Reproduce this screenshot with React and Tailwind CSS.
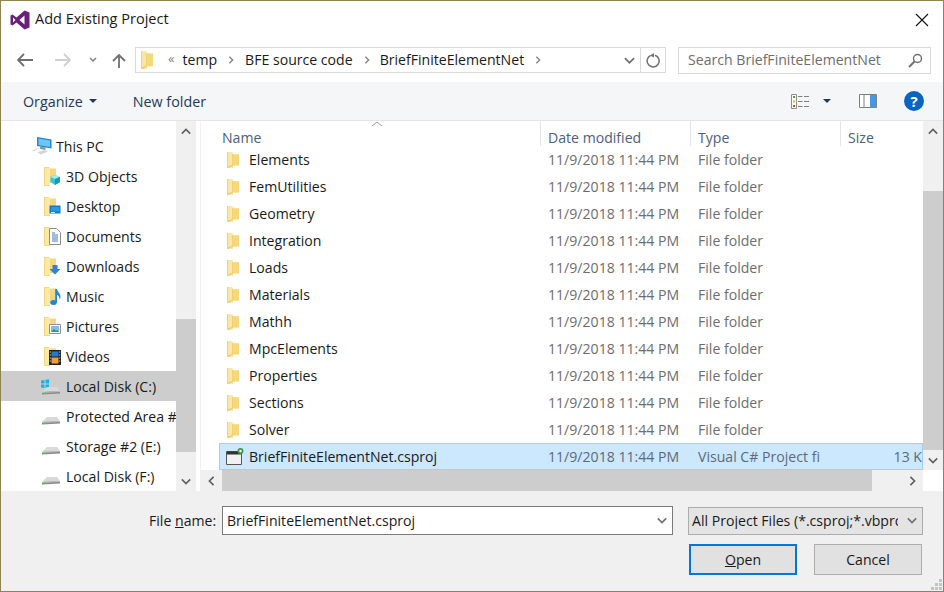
import React from 'react';

const Folder = ({ className = '', height = 16 }) => (
  <svg width="12" height={height} viewBox="0 0 12 16" preserveAspectRatio="none" className={`shrink-0 ${className}`}>
    <path d="M0 0h5l1.500 2H12v11.500H6V16H0z" fill="#fbe7a3" />
    <path d="M6 2.500h6v11H6z" fill="#f8d777" />
    <path d="M0 0h1v16H0zM6 2v11.500h-1V2z" fill="#efd07f" />
    <path d="M1 14.500L6 12.500v1L1 16z" fill="#e9c86e" />
  </svg>
);

const Chevron = ({ dir = 'down', className = '' }) => {
  const d = {
    down: 'M1 2l5 5 5-5',
    up: 'M1 7l5-5 5 5',
    left: 'M7 1L2 6l5 5',
    right: 'M2 1l5 5-5 5',
  }[dir];
  const horizontal = dir === 'up' || dir === 'down';
  return (
    <svg width={horizontal ? 12 : 9} height={horizontal ? 9 : 12} viewBox={horizontal ? '0 0 12 9' : '0 0 9 12'} className={`shrink-0 ${className}`}>
      <path d={d} fill="none" stroke="currentColor" strokeWidth="2" />
    </svg>
  );
};

const VsLogo = () => (
  <svg width="20" height="20" viewBox="0 0 20 20" className="shrink-0">
    <path d="M14.500 0.500L19.500 2.500V17.500L14.500 19.500L6.500 12.500L2.500 15.500L0.500 14.500V5.500L2.500 4.500L6.500 7.500z" fill="#68217a" />
    <path d="M14.500 5.500L9.500 10l5 4.500zM3 7.500v5L5.500 10z" fill="#fff" />
  </svg>
);

const PcIcon = () => (
  <svg width="20" height="18" viewBox="0 0 20 18" className="shrink-0">
    <path d="M5 0l14.500 2.500v9L5 9z" fill="#1f86d0" />
    <path d="M6.500 1.500L18 3.500v6.500L6.500 8z" fill="#6cc5f2" />
    <path d="M8 9.500l6 1-1 2.500-5-1z" fill="#8d99a2" />
    <path d="M0 13.500L6 11l1 .5L1 14.500zM5 15l8-2 3 1.500-7 3z" fill="#d3d7da" />
  </svg>
);

const Drive = ({ windows }) => (
  <svg width="20" height="18" viewBox="0 0 20 18" className="shrink-0">
    {windows && (
      <g fill="#14b4f0">
        <path d="M0 3.500l3.500-.5v3.500H0zM4.500 2.800L8 2.300v4.200H4.500zM0 7.500h3.500V11L0 10.500zM4.500 7.500H8v4L4.500 11z" />
      </g>
    )}
    <path d="M1 15l5-5h10l3 4z" fill="#d9d9d9" />
    <path d="M1 15l18-1v2.500L1 17.500z" fill="#8a8a8a" />
    <path d="M1 15l18-1v1L1 16z" fill="#bdbdbd" />
    <path d="M3 15.500l3-.2v1l-3 .2z" fill="#5fd35f" />
  </svg>
);

const LibraryBadge = ({ type }) => {
  if (type === 'cube')
    return (
      <g>
        <path d="M6.500 10l4.500-2 5 2v5l-5 3-4.500-3z" fill="#38c5d8" />
        <path d="M6.500 10l4.500 2 5-2-5-2z" fill="#a2edf2" />
        <path d="M11 12v6l5-3v-5z" fill="#139bb5" />
      </g>
    );
  if (type === 'desktop')
    return (
      <g>
        <path d="M5.500 8.500h11v8h-11z" fill="#1577c9" />
        <path d="M7 10h8.500v4.500H7z" fill="#1f9be8" />
        <path d="M7 15h4v.8H7z" fill="#fff" />
      </g>
    );
  if (type === 'docs')
    return (
      <g>
        <path d="M5.500 1.500h7l4 4v12h-11z" fill="#fdfdfd" stroke="#8b8b8b" />
        <path d="M8 6h3M8 8h6M8 10h6M8 12h6M8 14h6" stroke="#3e82bd" strokeWidth="1" />
      </g>
    );
  if (type === 'down')
    return <path d="M8.500 8h5v4h3l-5.500 5.500L5.500 12h3z" fill="#2c84d4" />;
  if (type === 'music')
    return (
      <g fill="#1b87e2">
        <ellipse cx="9.500" cy="15.500" rx="3.300" ry="2.500" />
        <path d="M11.200 2h1.800c.3 3 3.500 4 3.500 8 0 1-.3 2-.8 3 0-3-1.200-4.500-2.700-5.500v8h-1.800z" />
      </g>
    );
  if (type === 'pictures')
    return (
      <g>
        <path d="M5.500 7.500h11v9h-11z" fill="#fff" stroke="#8f8f8f" />
        <path d="M7 9h8v6H7z" fill="#7cc0ea" />
        <path d="M7 15l3-3 2 2 1-1 2 2z" fill="#3f8e63" />
      </g>
    );
  return (
    <g>
      <path d="M5 3h12v15H5z" fill="#222" />
      <path d="M7.500 4.500h7v5h-7z" fill="#2679d3" />
      <path d="M7.500 10.500h7v6h-7z" fill="#e8a236" />
      <path d="M5.800 4.500h1v1h-1zM5.800 7.500h1v1h-1zM5.800 10.500h1v1h-1zM5.800 13.500h1v1h-1zM15.200 4.500h1v1h-1zM15.200 7.500h1v1h-1zM15.200 10.500h1v1h-1zM15.200 13.500h1v1h-1z" fill="#eee" />
    </g>
  );
};

const LibraryIcon = ({ type }) => (
  <svg width="18" height="19" viewBox="0 0 18 19" className="shrink-0">
    <path d="M0 0h5l1 1.500h6v14.500H6V19H0z" fill="#f6d77e" />
    <path d="M1 1h5v17H1z" fill="#fbe9a8" />
    <LibraryBadge type={type} />
  </svg>
);

const navItems = [
  { label: '3D Objects', type: 'cube' },
  { label: 'Desktop', type: 'desktop' },
  { label: 'Documents', type: 'docs' },
  { label: 'Downloads', type: 'down' },
  { label: 'Music', type: 'music' },
  { label: 'Pictures', type: 'pictures' },
  { label: 'Videos', type: 'film' },
];

const drives = [
  { label: 'Local Disk (C:)', windows: true, selected: true },
  { label: 'Protected Area #2 (D:)' },
  { label: 'Storage #2 (E:)' },
  { label: 'Local Disk (F:)' },
];

const folders = ['Elements', 'FemUtilities', 'Geometry', 'Integration', 'Loads', 'Materials', 'Mathh', 'MpcElements', 'Properties', 'Sections', 'Solver'];

const Sidebar = () => (
  <div className="w-[175px] h-full overflow-hidden pt-[10px] text-[#1a1a1a]">
    <div className="h-[30px] flex items-center pl-[31px] gap-[4px] whitespace-nowrap">
      <PcIcon />
      <span className="pt-[2px]">This PC</span>
    </div>
    {navItems.map(item => (
      <div key={item.label} className="h-[30px] flex items-center pl-[43px] gap-[4px] whitespace-nowrap">
        <LibraryIcon type={item.type} />
        <span className="pt-[2px]">{item.label}</span>
      </div>
    ))}
    {drives.map(d => (
      <div key={d.label} className={`h-[30px] flex items-center pl-[40px] gap-[5px] whitespace-nowrap ${d.selected ? 'bg-[#cdcdcd]' : ''}`}>
        <Drive windows={d.windows} />
        <span className="pt-[2px]">{d.label}</span>
      </div>
    ))}
  </div>
);

const VScroll = ({ top, thumb, className = '' }) => (
  <div className={`w-[20px] flex flex-col bg-[#f0f0f0] ${className}`}>
    <div className="h-[20px] flex items-center justify-center text-[#606060]"><Chevron dir="up" className="w-[10px]" /></div>
    <div style={{ height: top }} />
    <div className="bg-[#cdcdcd]" style={{ height: thumb }} />
    <div className="flex-1" />
    <div className="h-[20px] flex items-center justify-center text-[#606060]"><Chevron dir="down" className="w-[10px]" /></div>
  </div>
);

const Row = ({ icon, name, date, type, size, selected }) => {
  const muted = selected ? 'text-[#5f6a75]' : 'text-[#6d6d6d]';
  return (
    <div className={`h-[27px] ml-[18px] flex items-center whitespace-nowrap border ${selected ? 'bg-[#cce8ff] border-[#99d1ff]' : 'border-transparent'}`}>
      <div className="w-[321px] flex items-center shrink-0 pl-[7px] text-[#1a1a1a]">
        <div className="w-[22px]">{icon}</div>
        <span className="pt-[2px]">{name}</span>
      </div>
      <div className={`w-[150px] shrink-0 pl-[7px] pt-[2px] ${muted}`}>{date}</div>
      <div className={`w-[150px] shrink-0 pl-[7px] pt-[2px] ${muted}`}>{type}</div>
      <div className={`flex-1 overflow-hidden text-right pt-[2px] ${muted}`}>{size}</div>
    </div>
  );
};

const ProjectIcon = () => (
  <svg width="18" height="18" viewBox="0 0 18 18" className="-ml-[1px]">
    <path d="M0.500 3.500h15v13h-15z" fill="#f1f1f1" stroke="#555" />
    <path d="M1 3.500h14v3H1z" fill="#333" />
    <circle cx="14.500" cy="3" r="3" fill="#3d9b46" />
    <circle cx="14.500" cy="3" r="1.200" fill="#fff" />
  </svg>
);

export default function App() {
  return (
    <div className="w-[944px] h-[592px] border border-[#8f8254] bg-white flex flex-col overflow-hidden text-[14.100px] leading-none font-['Open_Sans',sans-serif] relative">
      {/* Title bar */}
      <div className="h-[37px] shrink-0 flex items-center pl-[9px] pr-[14px]">
        <VsLogo />
        <span className="ml-[5px] text-[#1a1a1a] text-[14.500px]">Add Existing Project</span>
        <svg width="14" height="14" viewBox="0 0 14 14" className="ml-auto">
          <path d="M1 1l12 12M13 1L1 13" stroke="#111" strokeWidth="1.100" />
        </svg>
      </div>

      {/* Address row */}
      <div className="h-[44px] shrink-0 flex items-center">
        <svg width="16" height="14" viewBox="0 0 16 14" className="ml-[16px]">
          <path d="M1 7h15M7 1L1 7l6 6" fill="none" stroke="#707070" strokeWidth="1.800" />
        </svg>
        <svg width="16" height="14" viewBox="0 0 16 14" className="ml-[22px]">
          <path d="M0 7h15M9 1l6 6-6 6" fill="none" stroke="#d0d0d0" strokeWidth="1.800" />
        </svg>
        <svg width="8" height="6" viewBox="0 0 8 6" className="ml-[18px]">
          <path d="M1 1l3 3 3-3" fill="none" stroke="#808080" strokeWidth="1.500" />
        </svg>
        <svg width="14" height="15" viewBox="0 0 14 15" className="ml-[15px]">
          <path d="M7 15V2M1 8l6-6 6 6" fill="none" stroke="#707070" strokeWidth="1.800" />
        </svg>
        <div className="ml-[9px] w-[531px] h-[26px] border border-[#d9d9d9] flex items-center text-[#1a1a1a]">
          <Folder className="ml-[5px]" height={18} />
          <span className="ml-[15px] text-[#808080] text-[13px] -mt-[3px]">«</span>
          <span className="ml-[8px]">temp</span>
          <Chevron dir="right" className="ml-[11px] w-[6px] text-[#808080]" />
          <span className="ml-[11px]">BFE source code</span>
          <Chevron dir="right" className="ml-[11px] w-[6px] text-[#808080]" />
          <span className="ml-[10px]">BriefFiniteElementNet</span>
          <Chevron dir="right" className="ml-[11px] w-[6px] text-[#808080]" />
          <Chevron dir="down" className="ml-auto mr-[5px] w-[11px] text-[#707070]" />
          <div className="w-[25px] h-full border-l border-[#d9d9d9] flex items-center justify-center">
            <svg width="15" height="15" viewBox="0 0 15 15">
              <path d="M9 2.200A6 6 0 1 1 4.500 2.500" fill="none" stroke="#707070" strokeWidth="1.500" />
              <path d="M8 0v4.500l-4-2z" fill="#707070" />
            </svg>
          </div>
        </div>
        <div className="ml-[12px] w-[253px] h-[27px] border border-[#d9d9d9] flex items-center pl-[9px] pr-[7px] text-[#6d6d6d]">
          <span>Search BriefFiniteElementNet</span>
          <svg width="15" height="15" viewBox="0 0 15 15" className="ml-auto">
            <circle cx="9.500" cy="5.500" r="4" fill="none" stroke="#707070" strokeWidth="1.500" />
            <path d="M6.500 8.500L1 14" stroke="#707070" strokeWidth="2" />
          </svg>
        </div>
      </div>

      {/* Toolbar */}
      <div className="h-[39px] shrink-0 bg-[#f5f6f7] border-b border-[#e5e5e5] flex items-center text-[#1e395b]">
        <span className="ml-[22px] pt-[2px] text-[14.300px]">Organize</span>
        <span className="ml-[6px] w-0 h-0 border-x-[4px] border-x-transparent border-t-[4px] border-t-[#1e395b]" />
        <span className="ml-[36px] pt-[2px] text-[14.300px]">New folder</span>
        <svg width="18" height="15" viewBox="0 0 18 15" className="ml-auto">
          <path d="M.5.500h5v14h-5z" fill="#fff" stroke="#8f8f8f" />
          <path d="M2 2h2v2H2z" fill="#54a14e" />
          <path d="M2 6.500h2v2H2z" fill="#e0b732" />
          <path d="M2 11h2v2H2z" fill="#c94a2a" />
          <path d="M7 2.500h4.500M13 2.500h5M7 7.500h4.500M13 7.500h5M7 12.500h4.500M13 12.500h5" stroke="#808080" />
        </svg>
        <span className="ml-[14px] w-0 h-0 border-x-[4px] border-x-transparent border-t-[4px] border-t-[#1e395b]" />
        <svg width="18" height="14" viewBox="0 0 18 14" className="ml-[28px]">
          <path d="M.5.500h17v13H.5z" fill="#fff" stroke="#808080" />
          <path d="M5 1v12" stroke="#808080" />
          <path d="M11 1h6v12h-6z" fill="#3f9be8" />
        </svg>
        <div className="ml-[27px] mr-[19px] w-[20px] h-[20px] rounded-full bg-[#0a64c2] text-white flex items-center justify-center font-bold text-[15px]">?</div>
      </div>

      {/* Main */}
      <div className="h-[370px] shrink-0 flex">
        <Sidebar />
        <VScroll top={178} thumb={133} />
        <div className="w-[5px] border-r border-[#f0f0f0]" />
        <div className="flex-1 flex flex-col min-w-0">
          <div className="flex-1 flex min-h-0">
            <div className="flex-1 min-w-0 flex flex-col relative overflow-hidden">
              <svg width="10" height="5" viewBox="0 0 10 5" className="absolute left-[171px] top-0">
                <path d="M0 5l5-4 5 4" fill="none" stroke="#9a9a9a" />
              </svg>
              <div className="h-[25px] shrink-0 flex items-stretch text-[#4c607a] whitespace-nowrap">
                <div className="w-[340px] shrink-0 pl-[21px] border-r border-[#e5e5e5] flex items-center pt-[9px]">Name</div>
                <div className="w-[150px] shrink-0 pl-[7px] border-r border-[#e5e5e5] flex items-center pt-[9px]">Date modified</div>
                <div className="w-[150px] shrink-0 pl-[7px] border-r border-[#e5e5e5] flex items-center pt-[9px]">Type</div>
                <div className="flex-1 pl-[7px] flex items-center pt-[9px]">Size</div>
              </div>
              {folders.map(name => (
                <Row key={name} icon={<Folder />} name={name} date="11/9/2018 11:44 PM" type="File folder" />
              ))}
              <Row icon={<ProjectIcon />} name="BriefFiniteElementNet.csproj" date="11/9/2018 11:44 PM" type="Visual C# Project fi" size="13 K" selected />
            </div>
            <VScroll top={50} thumb={259} />
          </div>
          <div className="h-[21px] shrink-0 flex">
            <div className="flex-1 flex bg-[#f0f0f0]">
              <div className="w-[21px] flex items-center justify-center text-[#606060]"><Chevron dir="left" className="h-[10px]" /></div>
              <div className="w-[650px] bg-[#cdcdcd]" />
              <div className="flex-1 flex items-center justify-end pr-[6px] text-[#606060]"><Chevron dir="right" className="h-[10px]" /></div>
            </div>
            <div className="w-[20px] bg-white" />
          </div>
        </div>
      </div>

      {/* Footer */}
      <div className="flex-1 bg-[#f0f0f0] text-[#1a1a1a] pt-[15px] pl-[148px] relative">
        <div className="flex items-center">
          <span className="w-[73px] pt-[2px]">File <u>n</u>ame:</span>
          <div className="w-[451px] h-[29px] border border-[#7a7a7a] bg-white flex items-center pl-[4px] pr-[5px]">
            <span className="pt-[2px]">BriefFiniteElementNet.csproj</span>
            <Chevron dir="down" className="ml-auto w-[10px] text-[#707070]" />
          </div>
          <div className="ml-[15px] w-[235px] h-[28px] border border-[#acacac] bg-[#e4e4e4] flex items-center pl-[3px] pr-[5px] overflow-hidden whitespace-nowrap">
            <span className="w-[206px] overflow-hidden pt-[2px]">All Project Files (*.csproj;*.vbproj)</span>
            <Chevron dir="down" className="ml-auto w-[10px] text-[#707070]" />
          </div>
        </div>
        <div className="flex mt-[9px] ml-[540px]">
          <div className="w-[108px] h-[31px] border-2 border-[#0078d7] bg-[#e1e1e1] flex items-center justify-center"><span className="pt-[2px]"><u>O</u>pen</span></div>
          <div className="ml-[17px] w-[108px] h-[31px] border border-[#adadad] bg-[#e1e1e1] flex items-center justify-center"><span className="pt-[2px]">Cancel</span></div>
        </div>
        <svg width="11" height="11" viewBox="0 0 11 11" className="absolute right-[1px] bottom-[1px]">
          <path d="M8 0h3v3H8zM4 4h3v3H4zM8 4h3v3H8zM0 8h3v3H0zM4 8h3v3H4zM8 8h3v3H8z" fill="#c4c4c4" />
        </svg>
      </div>
    </div>
  );
}
